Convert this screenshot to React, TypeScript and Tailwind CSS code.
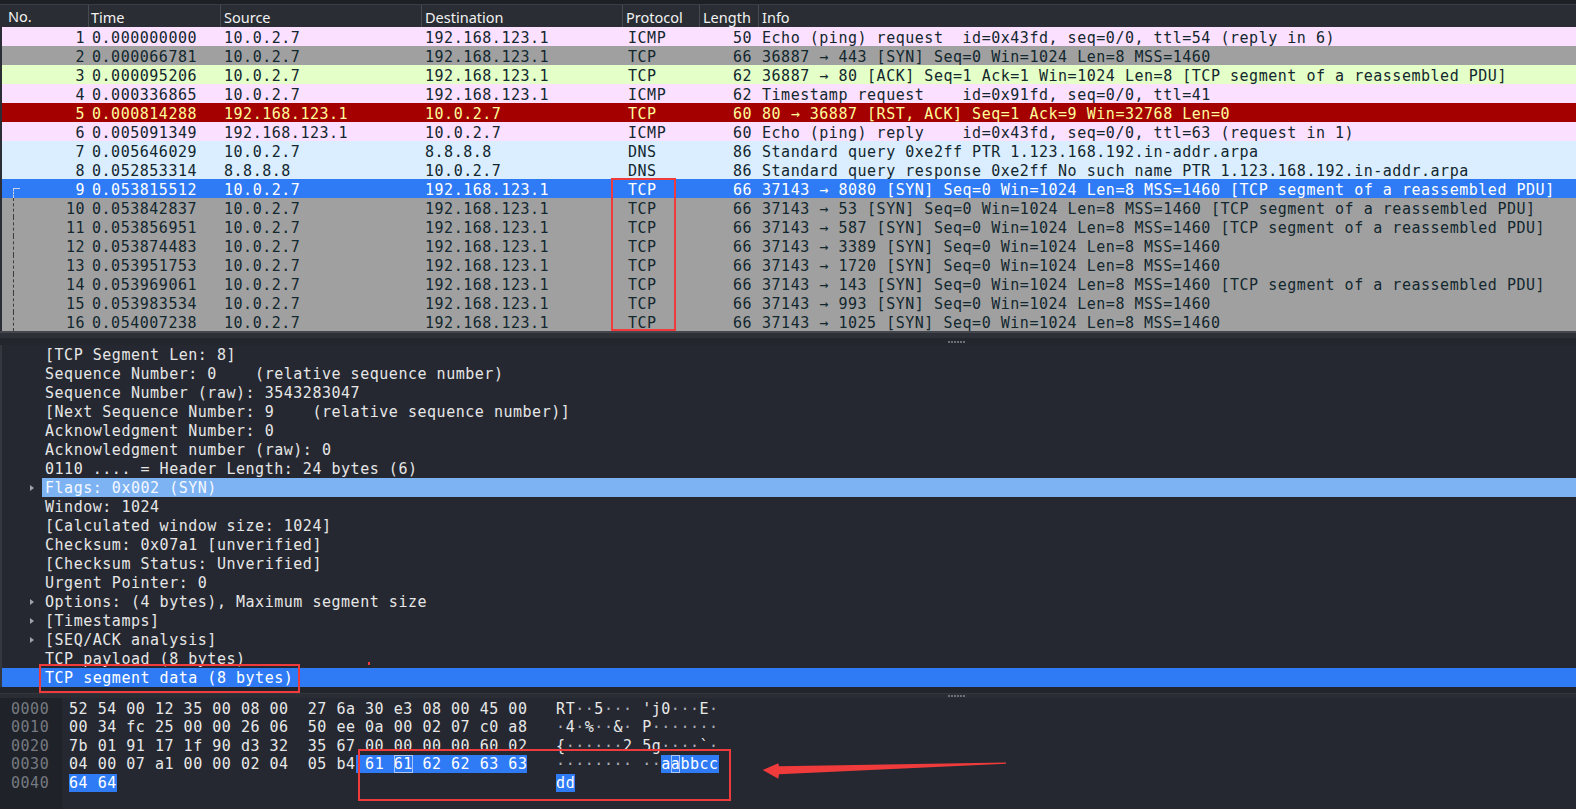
import React from "react";

type Kind = "icmp" | "syn" | "tcp" | "rst" | "udp" | "sel";

const rowCls: Record<Kind, string> = {
  icmp: "bg-[#fce0ff] text-[#12272e]",
  syn: "bg-[#a0a0a0] text-[#12272e]",
  tcp: "bg-[#e4ffc7] text-[#12272e]",
  rst: "bg-[#a40000] text-[#fffc9c]",
  udp: "bg-[#daeeff] text-[#12272e]",
  sel: "bg-[#2e7bf5] text-white",
};

const AR = "\u2192";
const SEG = " [TCP segment of a reassembled PDU]";

type Row = [number, string, string, string, string, number, string, Kind];

const rows: Row[] = [
  [1, "0.000000000", "10.0.2.7", "192.168.123.1", "ICMP", 50, "Echo (ping) request  id=0x43fd, seq=0/0, ttl=54 (reply in 6)", "icmp"],
  [2, "0.000066781", "10.0.2.7", "192.168.123.1", "TCP", 66, `36887 ${AR} 443 [SYN] Seq=0 Win=1024 Len=8 MSS=1460`, "syn"],
  [3, "0.000095206", "10.0.2.7", "192.168.123.1", "TCP", 62, `36887 ${AR} 80 [ACK] Seq=1 Ack=1 Win=1024 Len=8${SEG}`, "tcp"],
  [4, "0.000336865", "10.0.2.7", "192.168.123.1", "ICMP", 62, "Timestamp request    id=0x91fd, seq=0/0, ttl=41", "icmp"],
  [5, "0.000814288", "192.168.123.1", "10.0.2.7", "TCP", 60, `80 ${AR} 36887 [RST, ACK] Seq=1 Ack=9 Win=32768 Len=0`, "rst"],
  [6, "0.005091349", "192.168.123.1", "10.0.2.7", "ICMP", 60, "Echo (ping) reply    id=0x43fd, seq=0/0, ttl=63 (request in 1)", "icmp"],
  [7, "0.005646029", "10.0.2.7", "8.8.8.8", "DNS", 86, "Standard query 0xe2ff PTR 1.123.168.192.in-addr.arpa", "udp"],
  [8, "0.052853314", "8.8.8.8", "10.0.2.7", "DNS", 86, "Standard query response 0xe2ff No such name PTR 1.123.168.192.in-addr.arpa", "udp"],
  [9, "0.053815512", "10.0.2.7", "192.168.123.1", "TCP", 66, `37143 ${AR} 8080 [SYN] Seq=0 Win=1024 Len=8 MSS=1460${SEG}`, "sel"],
  [10, "0.053842837", "10.0.2.7", "192.168.123.1", "TCP", 66, `37143 ${AR} 53 [SYN] Seq=0 Win=1024 Len=8 MSS=1460${SEG}`, "syn"],
  [11, "0.053856951", "10.0.2.7", "192.168.123.1", "TCP", 66, `37143 ${AR} 587 [SYN] Seq=0 Win=1024 Len=8 MSS=1460${SEG}`, "syn"],
  [12, "0.053874483", "10.0.2.7", "192.168.123.1", "TCP", 66, `37143 ${AR} 3389 [SYN] Seq=0 Win=1024 Len=8 MSS=1460`, "syn"],
  [13, "0.053951753", "10.0.2.7", "192.168.123.1", "TCP", 66, `37143 ${AR} 1720 [SYN] Seq=0 Win=1024 Len=8 MSS=1460`, "syn"],
  [14, "0.053969061", "10.0.2.7", "192.168.123.1", "TCP", 66, `37143 ${AR} 143 [SYN] Seq=0 Win=1024 Len=8 MSS=1460${SEG}`, "syn"],
  [15, "0.053983534", "10.0.2.7", "192.168.123.1", "TCP", 66, `37143 ${AR} 993 [SYN] Seq=0 Win=1024 Len=8 MSS=1460`, "syn"],
  [16, "0.054007238", "10.0.2.7", "192.168.123.1", "TCP", 66, `37143 ${AR} 1025 [SYN] Seq=0 Win=1024 Len=8 MSS=1460`, "syn"],
];

type Detail = { text: string; exp?: boolean; hl?: "flags" | "sel" };
const details: Detail[] = [
  { text: "[TCP Segment Len: 8]" },
  { text: "Sequence Number: 0    (relative sequence number)" },
  { text: "Sequence Number (raw): 3543283047" },
  { text: "[Next Sequence Number: 9    (relative sequence number)]" },
  { text: "Acknowledgment Number: 0" },
  { text: "Acknowledgment number (raw): 0" },
  { text: "0110 .... = Header Length: 24 bytes (6)" },
  { text: "Flags: 0x002 (SYN)", exp: true, hl: "flags" },
  { text: "Window: 1024" },
  { text: "[Calculated window size: 1024]" },
  { text: "Checksum: 0x07a1 [unverified]" },
  { text: "[Checksum Status: Unverified]" },
  { text: "Urgent Pointer: 0" },
  { text: "Options: (4 bytes), Maximum segment size", exp: true },
  { text: "[Timestamps]", exp: true },
  { text: "[SEQ/ACK analysis]", exp: true },
  { text: "TCP payload (8 bytes)" },
  { text: "TCP segment data (8 bytes)", hl: "sel" },
];

const D = "\u00b7";

function Dots() {
  return (
    <div className="flex gap-[1px]">
      <span className="h-[2px] w-[2px] bg-[#6b6f77]" />
      <span className="h-[2px] w-[2px] bg-[#6b6f77]" />
      <span className="h-[2px] w-[2px] bg-[#6b6f77]" />
      <span className="h-[2px] w-[2px] bg-[#6b6f77]" />
      <span className="h-[2px] w-[2px] bg-[#6b6f77]" />
      <span className="h-[2px] w-[2px] bg-[#6b6f77]" />
    </div>
  );
}

function Asc({ s }: { s: string }) {
  return (
    <>
      {s.split("").map((c, i) =>
        c === D ? (
          <span key={i} className="text-[#a9adb5]">
            {c}
          </span>
        ) : (
          <span key={i}>{c}</span>
        )
      )}
    </>
  );
}

function Triangle() {
  return <span className="block h-0 w-0 border-y-[3.5px] border-l-[4px] border-y-transparent border-l-[#9ea2aa]" />;
}

export default function App() {
  const mono = "font-['DejaVu_Sans_Mono',monospace] text-[15px] tracking-[0.52px]";
  return (
    <div className="relative h-[809px] w-[1576px] overflow-hidden bg-[#252831]">
      {/* top strip */}
      <div className="h-[4px] bg-[#1d2025]" />
      <div className="h-px bg-[#3b3e46]" />

      {/* packet list header */}
      <div className="flex h-[22px] items-center border-l-2 border-[#2a2d33] bg-[#2a2d33] font-['Noto_Sans',sans-serif] text-[14.5px] text-[#f2f2f2]">
        <div className="w-[86px] shrink-0 pl-[6px] leading-[24px]">No.</div>
        <div className="h-full w-[132px] shrink-0 border-l border-[#474a51] pl-[2px] leading-[24px]">Time</div>
        <div className="h-full w-[201px] shrink-0 border-l border-[#474a51] pl-[3px] leading-[24px]">Source</div>
        <div className="h-full w-[201px] shrink-0 border-l border-[#474a51] pl-[3px] leading-[24px]">Destination</div>
        <div className="h-full w-[77px] shrink-0 border-l border-[#474a51] pl-[3px] leading-[24px]">Protocol</div>
        <div className="h-full w-[59px] shrink-0 border-l border-[#474a51] pl-[3px] leading-[24px]">Length</div>
        <div className="h-full flex-1 border-l border-[#474a51] pl-[3px] leading-[24px]">Info</div>
      </div>

      {/* packet list rows */}
      <div className={`border-l-2 border-[#2a2d33] ${mono}`}>
        {rows.map(([no, time, src, dst, proto, len, info, kind]) => (
          <div key={no} className={`flex h-[19px] leading-[22px] ${rowCls[kind]}`}>
            <div className="relative w-[86px] shrink-0 pr-[3px] text-right">
              {kind === "sel" && (
                <>
                  <span className="absolute left-[11px] top-[9px] h-px w-[7px] bg-[#c9d3e6]" />
                  <span className="absolute bottom-0 left-[11px] top-[9px] border-l border-dashed border-[#c9d3e6]" />
                </>
              )}
              {no > 9 && <span className="absolute bottom-0 left-[11px] top-0 border-l border-dashed border-[#3c3c3c]" />}
              {no}
            </div>
            <div className="w-[132px] shrink-0 pl-[4px]">{time}</div>
            <div className="w-[201px] shrink-0 pl-[4px]">{src}</div>
            <div className="w-[201px] shrink-0 pl-[4px]">{dst}</div>
            <div className="w-[77px] shrink-0 pl-[6px]">{proto}</div>
            <div className="w-[59px] shrink-0 pr-[6px] text-right">{len}</div>
            <div className="h-[19px] flex-1 overflow-hidden whitespace-pre pl-[4px]">{info}</div>
          </div>
        ))}
      </div>

      {/* splitter */}
      <div className="h-[2px] bg-[#43464d]" />
      <div className="h-[5px] bg-[#2d3037]" />
      <div className="flex h-[7px] items-center bg-[#23262d] pl-[948px]">
        <Dots />
      </div>

      {/* details pane */}
      <div className={`border-l-2 border-[#34373e] bg-[#252831] text-[#e6e6e6] ${mono}`}>
        {details.map((d, i) => (
          <div
            key={i}
            className={`flex h-[19px] items-center ${d.hl === "sel" ? "bg-[#2e7bf5] text-white" : ""}`}
          >
            <div className="flex w-[40px] shrink-0 items-center pl-[28px]">{d.exp && <Triangle />}</div>
            <div
              className={`h-full flex-1 whitespace-pre pl-[3px] leading-[21px] ${d.hl === "flags" ? "bg-[#7db3f2] text-[#f4f8ff]" : ""}`}
            >
              {d.text}
            </div>
          </div>
        ))}
      </div>

      {/* splitter 2 */}
      <div className="h-[6px] bg-[#22252c]" />
      <div className="flex h-[5px] items-center border-t border-[#33363d] bg-[#2a2d34] pl-[948px]">
        <Dots />
      </div>

      {/* hex pane */}
      <div className={`flex h-[111px] bg-[#252831] ${mono}`}>
        <div className="w-[62px] shrink-0 bg-[#1f2228] pl-[11px] pt-[2px] text-[#767a82]">
          <div className="h-[18.4px] leading-[18.4px]">0000</div>
          <div className="h-[18.4px] leading-[18.4px]">0010</div>
          <div className="h-[18.4px] leading-[18.4px]">0020</div>
          <div className="h-[18.4px] leading-[18.4px]">0030</div>
          <div className="h-[18.4px] leading-[18.4px]">0040</div>
        </div>
        <div className="flex-1 whitespace-pre pl-[7px] pt-[2px] text-[#e8e8e8]">
          <div className="h-[18.4px] leading-[18.4px]">
            {"52 54 00 12 35 00 08 00  27 6a 30 e3 08 00 45 00   "}
            <Asc s={`RT${D}${D}5${D}${D}${D} 'j0${D}${D}${D}E${D}`} />
          </div>
          <div className="h-[18.4px] leading-[18.4px]">
            {"00 34 fc 25 00 00 26 06  50 ee 0a 00 02 07 c0 a8   "}
            <Asc s={`${D}4${D}%${D}${D}&${D} P${D}${D}${D}${D}${D}${D}${D}`} />
          </div>
          <div className="h-[18.4px] leading-[18.4px]">
            {"7b 01 91 17 1f 90 d3 32  35 67 00 00 00 00 60 02   "}
            <Asc s={`{${D}${D}${D}${D}${D}${D}2 5g${D}${D}${D}${D}\`${D}`} />
          </div>
          <div className="h-[18.4px] leading-[18.4px]">
            {"04 00 07 a1 00 00 02 04  05 b4"}
            <span className="bg-[#2e7bf5] text-white">
              {" 61 "}
              <span className="outline outline-1 -outline-offset-1 outline-[#a9c6f5]">61</span>
              {" 62 62 63 63"}
            </span>
            {"   "}
            <Asc s={`${D}${D}${D}${D}${D}${D}${D}${D} ${D}${D}`} />
            <span className="bg-[#2e7bf5] text-white">
              {"a"}
              <span className="outline outline-1 -outline-offset-1 outline-[#a9c6f5]">a</span>
              {"bbcc"}
            </span>
          </div>
          <div className="h-[18.4px] leading-[18.4px]">
            <span className="bg-[#2e7bf5] text-white">64 64</span>
            {"                                              "}
            <span className="bg-[#2e7bf5] text-white">dd</span>
          </div>
        </div>
      </div>

      {/* annotations */}
      <div className="pointer-events-none absolute left-[611px] top-[178px] h-[153px] w-[65px] border-2 border-[#ef3b3b]" />
      <div className="pointer-events-none absolute left-[39px] top-[664px] h-[29px] w-[261px] border-2 border-[#ef3b3b]" />
      <div className="pointer-events-none absolute left-[358px] top-[749px] h-[52px] w-[373px] border-2 border-[#ef3b3b]" />
      <div className="pointer-events-none absolute left-[368px] top-[662px] h-[3px] w-[2px] bg-[#ef3b3b]" />
      <svg className="pointer-events-none absolute left-[755px] top-[758px]" width="260" height="26" viewBox="0 0 260 26">
        <polygon points="7.7,12 23.3,5.3 24,8.2 251,4.6 251,5.8 24,16.3 23.3,20.7" fill="#ef3b3b" />
      </svg>
    </div>
  );
}
